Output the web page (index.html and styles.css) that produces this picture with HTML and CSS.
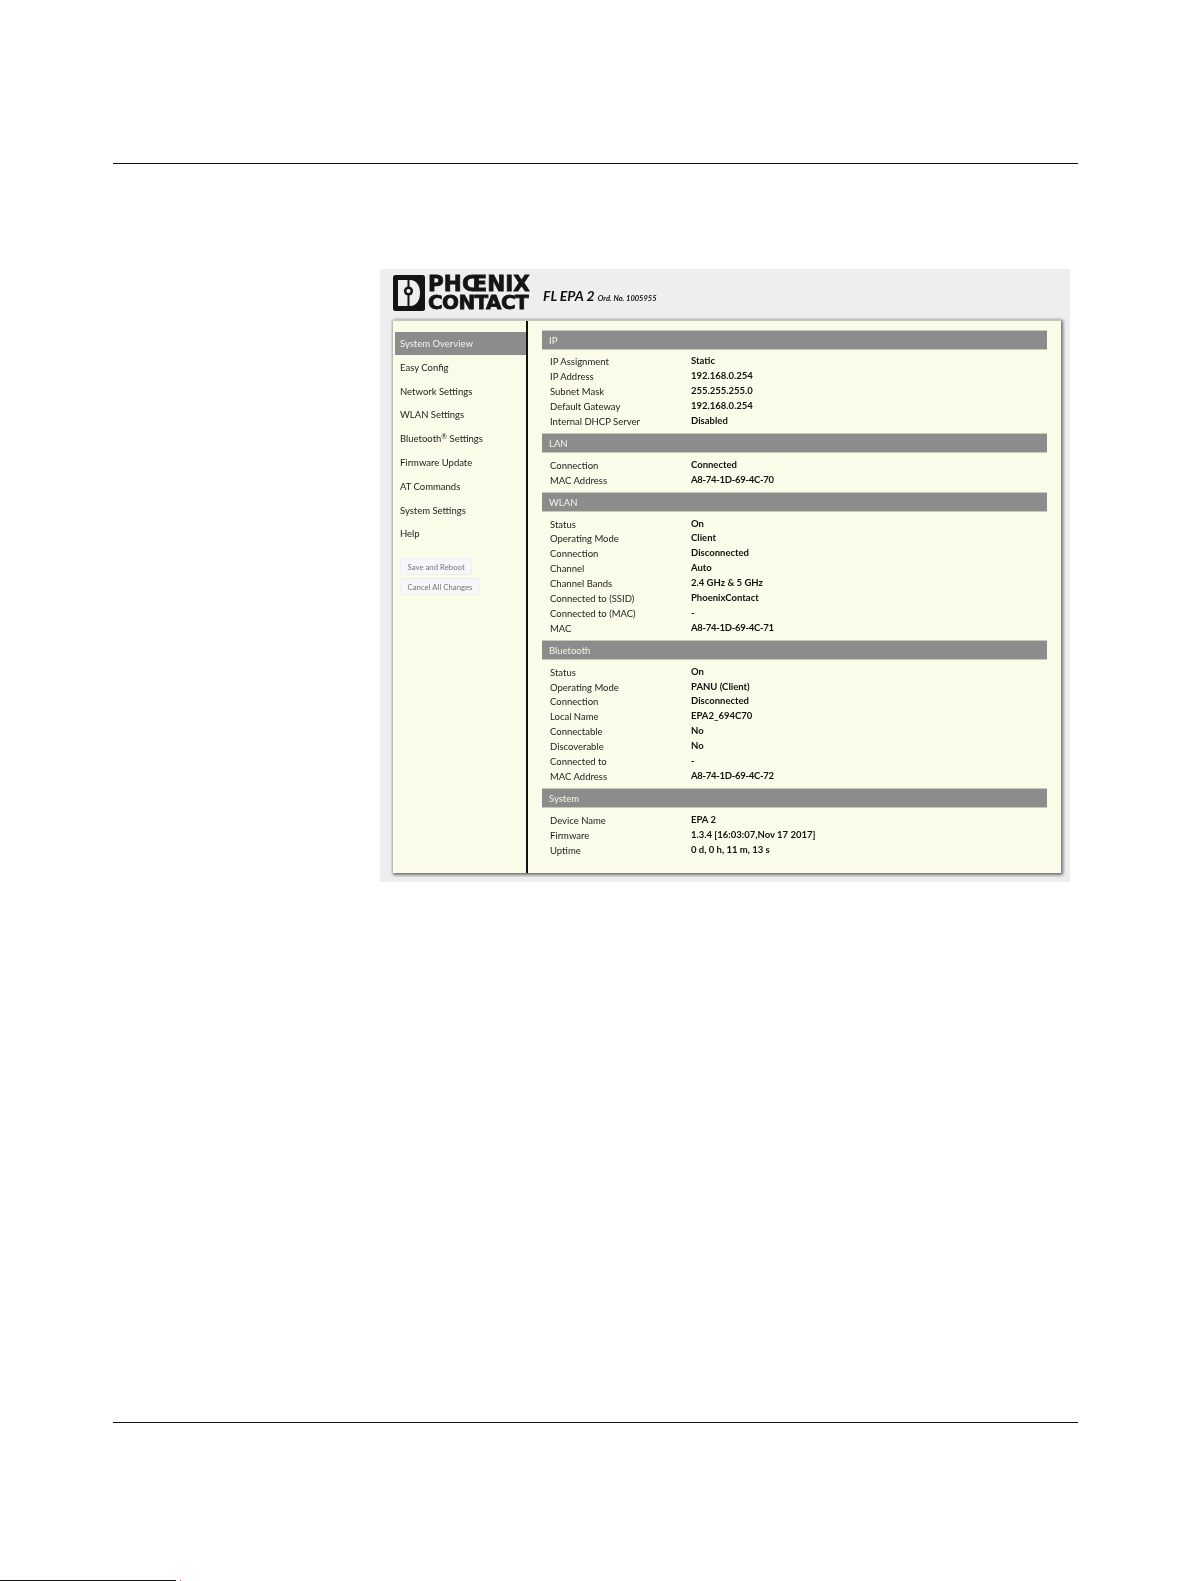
FILE: index.html
```html
<!DOCTYPE html>
<html lang="en">
<head>
<meta charset="utf-8">
<title>FL EPA 2</title>
<link rel="stylesheet" href="styles.css">
</head>
<body>
<div class="page">
  <hr class="rule rule-top">
  <div class="shot">
    <header class="brand">
      <svg class="logo-mark" viewBox="0 0 32 36" aria-hidden="true">
        <path d="M2.500 0H29.500Q32 0 32 2.500V33.500Q32 36 29.500 36H2.500Q0 36 0 33.500V2.500Q0 0 2.500 0Z" fill="#141414"/>
        <path d="M5 5H17C23.500 5 27 11 27 18S23.500 31 17 31H5Z" fill="#eee"/>
        <rect x="14.500" y="5" width="2" height="26" fill="#141414"/>
        <circle cx="15.500" cy="16" r="4.600" fill="#141414"/>
        <circle cx="15.500" cy="16" r="2.100" fill="#eee"/>
      </svg>
      <div class="logo-word"><span class="logo-top">PHŒNIX</span><span class="logo-bottom">CONTACT</span></div>
      <div class="product">FL EPA 2 <small>Ord. No. 1005955</small></div>
    </header>
    <div class="panel">
      <nav class="nav">
        <a class="nav-item active">System Overview</a>
        <a class="nav-item">Easy Config</a>
        <a class="nav-item">Network Settings</a>
        <a class="nav-item">WLAN Settings</a>
        <a class="nav-item">Bluetooth<sup>®</sup> Settings</a>
        <a class="nav-item">Firmware Update</a>
        <a class="nav-item">AT Commands</a>
        <a class="nav-item">System Settings</a>
        <a class="nav-item">Help</a>
        <div class="actions">
          <button class="btn">Save and Reboot</button>
          <button class="btn">Cancel All Changes</button>
        </div>
      </nav>
      <main class="content">
        <section>
          <h2>IP</h2>
          <dl>
            <dt>IP Assignment</dt><dd>Static</dd>
            <dt>IP Address</dt><dd>192.168.0.254</dd>
            <dt>Subnet Mask</dt><dd>255.255.255.0</dd>
            <dt>Default Gateway</dt><dd>192.168.0.254</dd>
            <dt>Internal DHCP Server</dt><dd>Disabled</dd>
          </dl>
        </section>
        <section>
          <h2>LAN</h2>
          <dl>
            <dt>Connection</dt><dd>Connected</dd>
            <dt>MAC Address</dt><dd class="mac">A8-74-1D-69-4C-70</dd>
          </dl>
        </section>
        <section>
          <h2>WLAN</h2>
          <dl>
            <dt>Status</dt><dd>On</dd>
            <dt>Operating Mode</dt><dd>Client</dd>
            <dt>Connection</dt><dd>Disconnected</dd>
            <dt>Channel</dt><dd>Auto</dd>
            <dt>Channel Bands</dt><dd>2.4 GHz &amp; 5 GHz</dd>
            <dt>Connected to (SSID)</dt><dd>PhoenixContact</dd>
            <dt>Connected to (MAC)</dt><dd>-</dd>
            <dt>MAC</dt><dd class="mac">A8-74-1D-69-4C-71</dd>
          </dl>
        </section>
        <section>
          <h2>Bluetooth</h2>
          <dl>
            <dt>Status</dt><dd>On</dd>
            <dt>Operating Mode</dt><dd>PANU (Client)</dd>
            <dt>Connection</dt><dd>Disconnected</dd>
            <dt>Local Name</dt><dd>EPA2_694C70</dd>
            <dt>Connectable</dt><dd>No</dd>
            <dt>Discoverable</dt><dd>No</dd>
            <dt>Connected to</dt><dd>-</dd>
            <dt>MAC Address</dt><dd class="mac">A8-74-1D-69-4C-72</dd>
          </dl>
        </section>
        <section>
          <h2>System</h2>
          <dl>
            <dt>Device Name</dt><dd>EPA 2</dd>
            <dt>Firmware</dt><dd>1.3.4 [16:03:07,Nov 17 2017]</dd>
            <dt>Uptime</dt><dd>0 d, 0 h, 11 m, 13 s</dd>
          </dl>
        </section>
      </main>
    </div>
  </div>
  <hr class="rule rule-bottom">
</div>
<div class="footnote"><span class="footnote-line"></span><span class="footnote-dot"></span></div>
</body>
</html>
```
FILE: styles.css
```css
* { box-sizing: border-box; }
html, body { margin: 0; padding: 0; background: #fff; }
body {
  position: relative;
  height: 1581px;
  overflow: hidden;
  font-family: "Lato", "Open Sans", sans-serif;
  color: #1c1c1c;
}
.page {
  display: flex;
  flex-direction: column;
  padding: 163px 113px 0 113px;
}
.rule {
  border: 0;
  height: 1px;
  margin: 0;
  background: #111;
  width: 965px;
}
.shot {
  width: 690px;
  height: 613px;
  margin: 105px 0 0 267px;
  padding: 6px 8px 0 13px;
  background: #eee;
  filter: blur(.35px);
}
.rule-bottom { margin-top: 540px; }
.brand {
  display: flex;
  align-items: center;
  height: 36px;
}
.logo-mark { width: 32px; height: 36px; flex: none; }
.logo-word {
  display: flex;
  flex-direction: column;
  width: 106px;
  margin-left: 3px;
  font-family: "DejaVu Sans", sans-serif;
  font-weight: 700;
  font-size: 20px;
  line-height: 18px;
  color: #141414;
  -webkit-text-stroke: 0.800px #141414;
}
.logo-word span { display: block; height: 18px; white-space: nowrap; }
.logo-top { font-size: 21.500px; letter-spacing: .100px; }
.logo-bottom { letter-spacing: -.600px; }
.product {
  margin: 4px 0 0 9px;
  font-family: "Lato", sans-serif;
  font-size: 14px;
  font-weight: 700;
  font-style: italic;
  color: #111;
  white-space: nowrap;
}
.product small { font-size: 7.500px; }
.panel {
  display: flex;
  width: 668px;
  height: 553px;
  margin-top: 9px;
  background: #fafbe8;
  border-top: 1px solid #c9c9b8;
  box-shadow: 1px 1px 3px 1px rgba(0, 0, 0, .55);
}
.nav {
  width: 135px;
  flex: none;
  padding: 10.600px 0 0 2px;
  border-right: 2px solid #111;
}
.nav-item {
  display: flex;
  align-items: center;
  height: 23.800px;
  padding-left: 5px;
  font-size: 9.500px;
  white-space: pre;
}
.nav-item.active {
  background: #8c8c8c;
  color: #f4f4e8;
}
.nav-item sup {
  font-size: 7px;
  line-height: 1;
  margin-bottom: 5px;
}
.actions {
  display: flex;
  flex-direction: column;
  align-items: flex-start;
  gap: 3px;
  margin: 12.400px 0 0 5px;
}
.btn {
  height: 17px;
  padding: 0 6.500px;
  border: 1px solid #f0f0ea;
  border-radius: 2px;
  background: #f6f6fb;
  color: #777;
  font: 400 7.800px "Lato", sans-serif;
}
.content {
  flex: 1;
  padding: 9px 14px 0 14px;
}
section { margin-bottom: 3.700px; }
h2 {
  height: 20px;
  margin: 0;
  padding: 0 0 0 7px;
  display: flex;
  align-items: center;
  background: #8c8c8c;
  border-top: 1px solid #c9c9b6;
  border-bottom: 1px solid #c9c9b6;
  color: #f4f4e8;
  font-size: 9.500px;
  font-weight: 400;
}
dl {
  display: grid;
  grid-template-columns: 141px 1fr;
  grid-auto-rows: 14.900px;
  margin: 5.300px 0 0;
  padding-left: 8px;
  font-size: 9.500px;
  line-height: 14.900px;
}
dt { white-space: nowrap; }
dd {
  margin: 0;
  padding-bottom: 3px;
  line-height: 11.900px;
  font-weight: 700;
  color: #111;
  white-space: nowrap;
}
dd.mac { letter-spacing: -.270px; }
.footnote {
  position: absolute;
  left: 0;
  top: 1580px;
  display: flex;
  gap: 4px;
}
.footnote-line { width: 176px; height: 1px; background: #111; }
.footnote-dot { width: 1px; height: 1px; background: #e33; }
```
